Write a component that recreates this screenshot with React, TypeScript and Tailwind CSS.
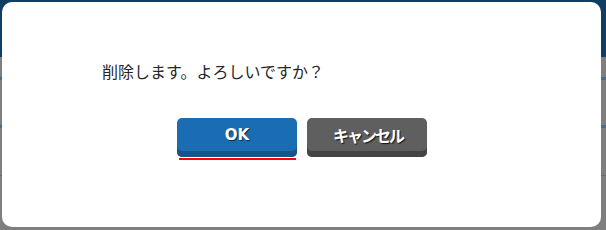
import React from "react";

export default function App() {
  return (
    <div className="relative w-[606px] h-[230px] overflow-hidden bg-[#7f7f7f]">
      {/* dimmed page behind the dialog */}
      <div className="flex flex-col">
        <div className="h-[57px] bg-[#0f3e62]" />
        <div className="h-[20px]" />
        <div className="h-[3px] bg-[#416f93]" />
        <div className="h-[45px]" />
        <div className="h-[3px] bg-[#416f93]" />
        <div className="h-[47px]" />
        <div className="h-px bg-[#6a6a6a]" />
      </div>

      {/* dialog */}
      <div className="absolute left-[2px] top-[2px] w-[599px] h-[225px] rounded-[10px] bg-white flex flex-col">
        <div
          className="pl-[100px] pt-[57px] text-[16px] leading-[24px] text-[#262626]"
          style={{ fontFamily: '"Noto Sans CJK JP", sans-serif' }}
        >
          削除します。よろしいですか？
        </div>
        <div className="mt-[35px] flex justify-center gap-[10px] pl-[1px]">
          <div className="flex flex-col items-center">
            <button
              className="w-[120px] h-[39px] rounded-[5px] bg-[#1a6db3] shadow-[inset_0_-6px_0_#14558c] pb-[5px] text-white text-[15px] leading-none font-bold [text-shadow:1px_1px_1px_rgba(0,0,0,0.6)]"
              style={{ fontFamily: '"DejaVu Sans", Verdana, sans-serif' }}
            >
              OK
            </button>
            <div className="mt-[1px] h-[2px] w-[117px] bg-[#ff0000]" />
          </div>
          <button
            className="w-[120px] h-[39px] rounded-[5px] bg-[#5f5f5f] shadow-[inset_0_-6px_0_#444444] pb-[5px] pl-[2px] text-white text-[16px] tracking-[-2px] leading-none font-bold [text-shadow:1px_1px_1px_rgba(0,0,0,0.8)]"
            style={{ fontFamily: '"Noto Sans CJK JP", sans-serif' }}
          >
            キャンセル
          </button>
        </div>
      </div>
    </div>
  );
}
